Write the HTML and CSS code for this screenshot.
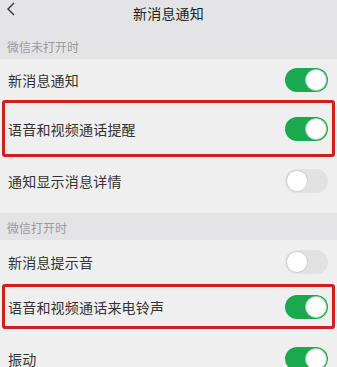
FILE: index.html
```html
<!DOCTYPE html>
<html lang="zh-CN">
<head>
    <meta charset="UTF-8">
    <meta name="viewport" content="width=device-width, initial-scale=1.0">
    <title>新消息通知</title>
    <link rel="stylesheet" href="styles.css">
</head>
<body>
    <div class="page">
        <div class="header">
            <svg class="back" width="10" height="14" viewBox="0 0 10 14">
                <path d="M8 1 L2 7 L8 13" fill="none" stroke="#333" stroke-width="1.4"/>
            </svg>
            <div class="title">新消息通知</div>
        </div>

        <div class="section-label">微信未打开时</div>
        <div class="row row-1">
            <span>新消息通知</span>
            <div class="switch on"><div class="knob"></div></div>
        </div>
        <div class="row row-2 marked">
            <span>语音和视频通话提醒</span>
            <div class="switch on"><div class="knob"></div></div>
        </div>
        <div class="row row-3">
            <span>通知显示消息详情</span>
            <div class="switch"><div class="knob"></div></div>
        </div>

        <div class="section-label">微信打开时</div>
        <div class="row row-4">
            <span>新消息提示音</span>
            <div class="switch"><div class="knob"></div></div>
        </div>
        <div class="row row-5 marked">
            <span>语音和视频通话来电铃声</span>
            <div class="switch on"><div class="knob"></div></div>
        </div>
        <div class="row row-6">
            <span>振动</span>
            <div class="switch on"><div class="knob"></div></div>
        </div>
    </div>
</body>
</html>
```

FILE: styles.css
```css
body {
    margin: 0;
    padding: 0;
    font-family: "Noto Sans CJK SC", "Noto Sans", sans-serif;
    background-color: #efefef;
    color: #333;
}
.page {
    width: 337px;
    height: 367px;
    overflow: hidden;
}
.header {
    height: 32px;
    background-color: #e4e4e6;
    display: flex;
    align-items: center;
    justify-content: center;
    position: relative;
}
.back {
    position: absolute;
    left: 6px;
    top: 2px;
}
.title {
    font-size: 14px;
    letter-spacing: 0.2px;
    margin-top: -6px;
    color: #222;
}
.section-label {
    height: 27px;
    background-color: #e4e4e6;
    font-size: 12px;
    color: #9a9a9a;
    padding-left: 7px;
    display: flex;
    align-items: center;
    box-sizing: border-box;
    padding-top: 2px;
}
.row {
    display: flex;
    align-items: center;
    justify-content: space-between;
    padding: 0 9px 0 8px;
    font-size: 14px;
    letter-spacing: 0.2px;
    background-color: #efefef;
    box-sizing: border-box;
}
.row-1 { height: 41px; }
.row-2 { height: 57px; }
.row-3 { height: 56px; padding-bottom: 8px; }
.row-4 { height: 44px; }
.row-5 { height: 45px; }
.row-6 { height: 60px; padding-bottom: 0; }
.row.marked {
    margin: 0 2px;
    border: 3px solid #d01f1f;
    border-radius: 3px;
    padding: 0 4px 0 3px;
}
.switch {
    width: 43px;
    height: 24px;
    border-radius: 12px;
    background-color: #e2e2e2;
    position: relative;
    box-sizing: border-box;
}
.switch.on {
    background-color: #1aa94f;
}
.knob {
    position: absolute;
    top: 1px;
    left: 1px;
    width: 22px;
    height: 22px;
    border-radius: 50%;
    background-color: #fff;
    border: 1px solid #d0d0d0;
    box-sizing: border-box;
}
.switch.on .knob {
    left: auto;
    right: 1px;
    border-color: #9dd3ae;
}
```
